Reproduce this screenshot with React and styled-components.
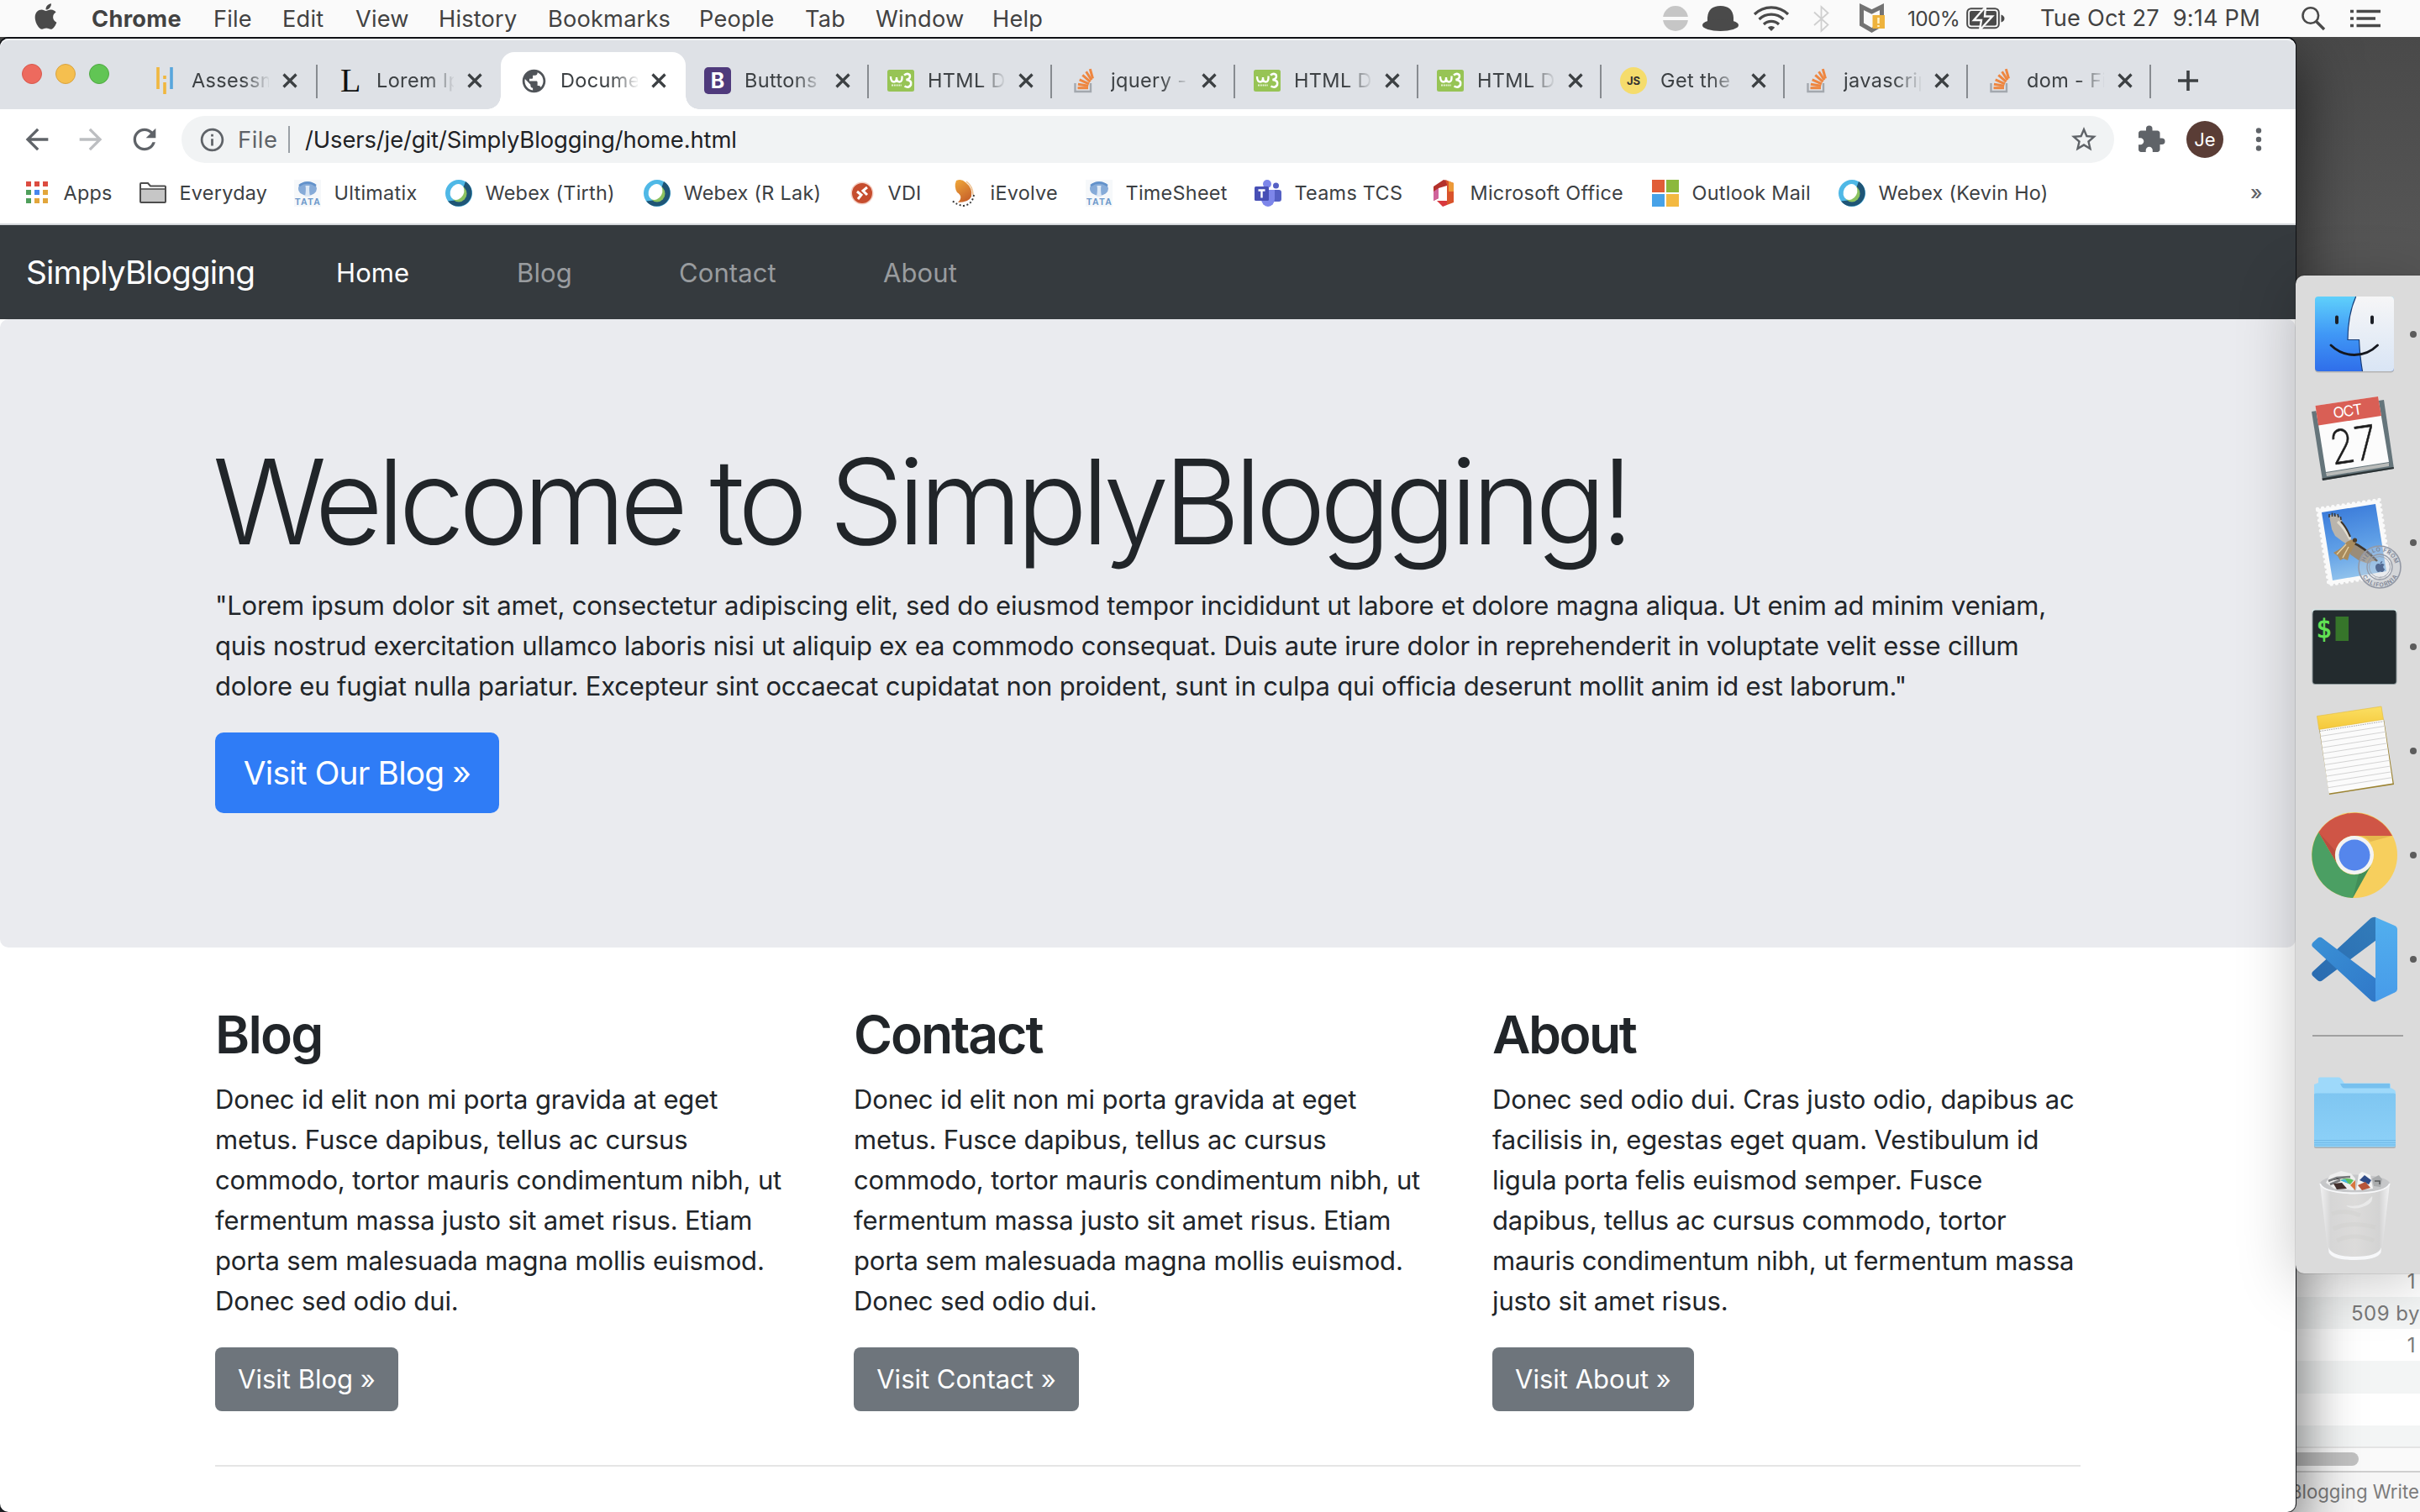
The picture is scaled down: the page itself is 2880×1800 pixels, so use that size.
import React from 'react';
import styled, { createGlobalStyle, css } from 'styled-components';
import { FaApple } from 'react-icons/fa';
import { MdArrowBack, MdArrowForward, MdRefresh, MdStarBorder, MdExtension, MdInfoOutline, MdPublic } from 'react-icons/md';

const sans = `Inter, "Liberation Sans", sans-serif`;

const GlobalStyle = createGlobalStyle`
  *, *::before, *::after { box-sizing: border-box; }
  html, body { margin: 0; overflow: hidden; }
  body { font-family: ${sans}; }
  h1, h2, p { margin: 0; }
  svg { display: block; flex: none; overflow: visible; }
`;

/* ---------- desktop ---------- */

const Desktop = styled.div`
  position: relative;
  width: 2880px;
  height: 1800px;
  overflow: hidden;
  display: flex;
  flex-direction: column;
  background: linear-gradient(180deg, #474747 0, #565656 300px, #565656 1000px, #2b2f33 1790px);
`;

/* ---------- menu bar ---------- */

const MenuBar = styled.header`
  position: relative;
  z-index: 3;
  height: 44px;
  flex: none;
  display: flex;
  align-items: center;
  padding-left: 37px;
  background: #fafafa;
  color: #424242;
  font-size: 27.2px;
  letter-spacing: 0.2px;
  white-space: pre;
`;

const AppleSlot = styled.div`
  width: 72px;
  color: #4a4a4a;
  margin-top: -5px;
`;

const MenuItem = styled.div`
  width: ${(p) => p.$w}px;
  flex: none;
  line-height: 44px;
  margin-top: 1px;
  font-weight: ${(p) => (p.$strong ? 700 : 400)};
  letter-spacing: ${(p) => (p.$strong ? 0.3 : 0.2)}px;
`;

const StatusArea = styled.div`
  margin-left: auto;
  padding-right: 47px;
  display: flex;
  align-items: center;
`;

const StatusSlot = styled.div`
  width: ${(p) => p.$w}px;
  flex: none;
  line-height: 44px;
  font-size: ${(p) => p.$size || 27.2}px;
  letter-spacing: ${(p) => p.$ls || 0}px;
`;

/* ---------- browser window ---------- */

const BrowserWindow = styled.section`
  position: relative;
  z-index: 1;
  margin-top: 2px;
  width: 2732px;
  height: 1754px;
  display: flex;
  flex-direction: column;
  border-radius: 10px;
  background: #fff;
  box-shadow: 0 -1px 0 1px #101216, 0 0 0 1px rgba(12, 14, 18, 0.6), 0 26px 70px 4px rgba(0, 0, 0, 0.6);
`;

const TabStrip = styled.div`
  height: 84px;
  flex: none;
  display: flex;
  padding: 16px 0 0 26px;
  background: #dee1e6;
  border-radius: 10px 10px 0 0;
  box-shadow: inset 0 2px 0 #eff1f4;
`;

const TrafficLights = styled.div`
  width: 132px;
  height: 52px;
  display: flex;
  align-items: center;
  gap: 16px;
`;

const Light = styled.span`
  width: 24px;
  height: 24px;
  border-radius: 50%;
  background: ${(p) => p.$color};
  border: 1px solid ${(p) => p.$edge};
`;

const Tab = styled.div`
  position: relative;
  width: ${(p) => p.$w}px;
  height: 68px;
  flex: none;
  display: flex;
  align-items: center;
  padding-left: ${(p) => (p.$active ? 23 : 22)}px;
  color: #3c4043;
  ${(p) =>
    p.$active &&
    css`
      background: #fff;
      border-radius: 16px 16px 0 0;
      &::before,
      &::after {
        content: '';
        position: absolute;
        bottom: 0;
        width: 16px;
        height: 16px;
      }
      &::before {
        left: -16px;
        background: radial-gradient(circle at 0 0, transparent 15.5px, #fff 16px);
      }
      &::after {
        right: -16px;
        background: radial-gradient(circle at 100% 0, transparent 15.5px, #fff 16px);
      }
    `}
  ${(p) =>
    p.$divider &&
    css`
      background: linear-gradient(#878b90, #878b90) right 15px / 2px 40px no-repeat;
    `}
`;

const TabIcon = styled.div`
  width: 32px;
  height: 32px;
  flex: none;
  display: grid;
  place-items: center;
`;

const TabTitle = styled.div`
  width: 92px;
  margin-left: 16px;
  flex: none;
  overflow: hidden;
  white-space: pre;
  font-size: 23.5px;
  line-height: 32px;
  letter-spacing: 0.35px;
  mask-image: linear-gradient(90deg, #000 60px, transparent 94px);
`;

const TabClose = styled.div`
  margin-left: 14.5px;
`;

const NewTab = styled.div`
  height: 68px;
  display: flex;
  align-items: center;
  margin-left: 32px;
`;

const Toolbar = styled.div`
  height: 72px;
  flex: none;
  display: flex;
  align-items: center;
  padding: 0 36px 0 24px;
  color: #5f6368;
`;

const ToolButton = styled.div`
  width: 64px;
  flex: none;
  color: ${(p) => (p.$disabled ? '#bcbec1' : '#5f6368')};
`;

const Omnibox = styled.div`
  height: 56px;
  width: 2300px;
  flex: none;
  display: flex;
  align-items: center;
  border-radius: 28px;
  background: #f1f3f4;
  padding: 0 18px 0 20px;
  font-size: 27.4px;
  white-space: nowrap;
`;

const Scheme = styled.span`
  width: 60px;
  margin-left: 14px;
  letter-spacing: 0.5px;
`;

const SchemeDivider = styled.span`
  width: 2px;
  height: 32px;
  background: #9aa0a6;
  margin-right: 18px;
`;

const Url = styled.span`
  flex: 1;
  color: #202124;
  letter-spacing: -0.1px;
`;

const Avatar = styled.div`
  width: 44px;
  height: 44px;
  margin-left: 24px;
  display: grid;
  place-items: center;
  border-radius: 50%;
  background: #5a3d36;
  color: #fff;
  font-size: 22px;
`;

const Extension = styled.div`
  margin-left: 26px;
`;

const Overflow = styled.div`
  margin-left: 37px;
`;

const BookmarksBar = styled.div`
  height: 66px;
  flex: none;
  display: flex;
  align-items: center;
  padding: 0 39px 9px 28px;
  border-bottom: 2px solid #d5d8dc;
  color: #3c4043;
  font-size: 23.4px;
  letter-spacing: 0.28px;
  white-space: nowrap;
`;

const Bookmark = styled.div`
  width: ${(p) => p.$w}px;
  flex: none;
  display: flex;
  align-items: center;
  gap: 15.5px;
`;

const BookmarkMore = styled.div`
  margin-left: auto;
  font-size: 24px;
  font-weight: 500;
  color: #5f6368;
`;

/* ---------- blog page ---------- */

const Page = styled.main`
  flex: 1;
  min-height: 0;
  overflow: hidden;
  border-radius: 0 0 10px 10px;
  color: #212529;
  font-size: 31px;
  line-height: 48px;
  letter-spacing: -0.13px;
  white-space: nowrap;
`;

const Navbar = styled.nav`
  height: 112px;
  display: flex;
  align-items: center;
  padding: 0 31px;
  background: #353a3e;
`;

const Brand = styled.div`
  width: 369px;
  color: #fff;
  font-size: 38.8px;
  letter-spacing: -0.95px;
  line-height: 60px;
`;

const NavLink = styled.div`
  width: ${(p) => p.$w}px;
  color: ${(p) => (p.$active ? '#fff' : '#999c9f')};
  letter-spacing: 0.1px;
  margin-top: 1px;
`;

const Jumbotron = styled.section`
  height: 748px;
  padding: 128px 226px 0 256px;
  border-radius: 10px;
  background: #eaebef;
`;

const Title = styled.h1`
  font-size: 140.5px;
  font-weight: 320;
  line-height: 172.8px;
  letter-spacing: -7.1px;
  padding-top: 3px;
  margin: 0 0 13px -3px;
`;

const Lead = styled.p`
  margin-bottom: 31px;
  letter-spacing: -0.18px;
`;

const Copy = styled.p`
  margin-bottom: 31px;
`;

const Line = styled.span`
  display: block;
`;

const Button = styled.div`
  display: inline-flex;
  align-items: center;
  justify-content: center;
  height: ${(p) => (p.$large ? 96 : 76)}px;
  width: ${(p) => p.$w}px;
  border-radius: ${(p) => (p.$large ? 10 : 8)}px;
  background: ${(p) => (p.$large ? '#2f7cf6' : '#6e757c')};
  color: #fff;
  font-size: ${(p) => (p.$large ? 38.8 : 31)}px;
  letter-spacing: ${(p) => (p.$large ? -0.8 : 0)}px;
`;

const Container = styled.div`
  margin: 63px 256px 0;
`;

const Columns = styled.div`
  display: grid;
  grid-template-columns: repeat(3, 700px);
  column-gap: 60px;
`;

const Heading = styled.h2`
  font-size: 62.5px;
  font-weight: 560;
  line-height: 76.8px;
  letter-spacing: ${(p) => p.$ls}px;
  padding-top: 2px;
  margin-bottom: 15px;
`;

const Rule = styled.hr`
  width: 2220px;
  height: 2px;
  border: 0;
  margin: 64px 0 0;
  background: #e5e5e5;
`;

/* ---------- file list window behind the browser ---------- */

const FileWindow = styled.section`
  position: absolute;
  left: 2700px;
  top: 1506px;
  width: 180px;
  height: 294px;
  display: flex;
  flex-direction: column;
  color: #7a7a7a;
  background: #fff;
`;

const FileRow = styled.div`
  height: ${(p) => p.$h || 38.2}px;
  display: flex;
  align-items: center;
  justify-content: flex-end;
  padding-right: ${(p) => p.$right ?? 5}px;
  background: ${(p) => (p.$alt ? '#f3f5f5' : '#fff')};
  font-size: 24px;
  letter-spacing: 0.5px;
  white-space: nowrap;
`;

const ScrollTrack = styled.div`
  height: 29px;
  padding: 5px 0;
  border-top: 2px solid #e4e4e4;
  background: #fafafa;
`;

const ScrollThumb = styled.div`
  width: 107px;
  height: 16px;
  border-radius: 8px;
  background: #c1c1c1;
`;

const PathBar = styled.div`
  flex: 1;
  border-top: 2px solid #cfcfcf;
  background: #f6f6f6;
  padding: 7px 0 0 25px;
  font-size: 22.2px;
  line-height: 32px;
  letter-spacing: 0;
  white-space: nowrap;
  color: #7c7c7c;
`;

/* ---------- dock ---------- */

const Dock = styled.aside`
  position: absolute;
  z-index: 2;
  right: 0;
  top: 328px;
  width: 148px;
  height: 1188px;
  padding: 19px 0 20px 19px;
  display: flex;
  flex-direction: column;
  gap: 22px;
  border-radius: 10px 0 0 10px;
  background: #dbdbdb;
  box-shadow: 0 0 0 1px rgba(0, 0, 0, 0.1), 0 10px 70px rgba(0, 0, 0, 0.22);
`;

const DockItem = styled.div`
  height: 102px;
  display: flex;
  align-items: center;
  gap: 15px;
`;

const RunningDot = styled.span`
  width: 8px;
  height: 8px;
  border-radius: 50%;
  background: #5c5c5c;
`;

const DockSeparator = styled.div`
  width: 108px;
  height: 2px;
  flex: none;
  margin: 17px 0 17px 1px;
  background: #a0a0a0;
`;

/* ---------- icons ---------- */

const WifiIcon = () => (
  <svg width="44" height="32" viewBox="0 0 44 32" fill="none" stroke="#4a4a4a" strokeWidth="3.2">
    <path d="M2 11 A28.5 28.5 0 0 1 42 11" />
    <path d="M7.5 17 A21 21 0 0 1 36.500 17" />
    <path d="M13 23 A13 13 0 0 1 31 23" />
    <path d="M22 31 L17.800 26.800 A6 6 0 0 1 26.200 26.800 Z" fill="#4a4a4a" stroke="none" />
  </svg>
);

const BatteryIcon = () => (
  <svg width="46" height="26" viewBox="0 0 46 26">
    <rect x="1.200" y="1.200" width="37.600" height="23" rx="4.500" fill="none" stroke="#4a4a4a" strokeWidth="2" />
    <rect x="4" y="4" width="32" height="17.500" rx="2" fill="#4a4a4a" />
    <path d="M41.500 8.500 Q45.500 10 45.500 13 Q45.500 16 41.500 17.500 Z" fill="#4a4a4a" />
    <path d="M23 -1 L9 15 H18 L16 27 L31 10.500 H22 Z" fill="#4a4a4a" stroke="#fafafa" strokeWidth="2.400" />
  </svg>
);

const ShieldIcon = () => (
  <svg width="30" height="32" viewBox="0 0 30 32">
    <path d="M2.500 2 L14.500 8 L26.500 2 V23 L14.500 30 L2.500 23 Z" fill="#fafafa" stroke="#737373" strokeWidth="5" />
    <rect x="15.500" y="12" width="14.500" height="16" fill="#eeb33d" />
    <path d="M22.500 15 V22 M22.500 24 V26" stroke="#fff3c9" strokeWidth="2.500" />
  </svg>
);

const StackIcon = () => (
  <svg width="28" height="30" viewBox="0 0 28 30" fill="none">
    <path d="M3.500 18 V28 H22 V18" stroke="#a3a8ae" strokeWidth="2.400" />
    <g stroke="#ee8640" strokeWidth="3">
      <path d="M6.500 23.700 H19" />
      <path d="M6.900 19.200 L19.200 21.200" />
      <path d="M8.700 13.800 L20 18.800" />
      <path d="M12.300 8.300 L21.500 16.300" />
      <path d="M16.600 4.200 L23 14.200" />
      <path d="M21.300 1.200 L24.500 12.500" />
    </g>
  </svg>
);

const W3Icon = () => (
  <svg width="32" height="26" viewBox="0 0 32 26">
    <rect width="32" height="26" rx="2.500" fill="#97c455" />
    <path d="M4 8 Q4 14.500 8 14.500 Q11 14.500 11 9 Q11 14.500 14.500 14.500 Q18 14.500 17.500 7.500" fill="none" stroke="#fff" strokeWidth="2.300" />
    <path d="M20 6.500 Q24 3.500 26.500 6 Q28.500 10.500 22.500 12 Q29.500 12.500 28 18 Q25.500 22.500 20.500 19.500" fill="none" stroke="#fff" strokeWidth="2.600" />
    <path d="M5 18.500 H17" stroke="#e4f1d2" strokeWidth="2" strokeDasharray="2 0.800" />
  </svg>
);

const BarsIcon = () => (
  <svg width="32" height="32" viewBox="0 0 32 32" strokeWidth="3.600">
    <path d="M8 0 V26 M16 10 V14 M16 18 V32" stroke="#f0b73f" />
    <path d="M24 0 V26" stroke="#58a6dc" />
  </svg>
);

const LetterIcon = () => (
  <svg width="32" height="32" viewBox="0 0 32 32">
    <text x="5" y="29" fontFamily="Liberation Serif, serif" fontSize="40" fill="#111">L</text>
  </svg>
);

const BootstrapIcon = () => (
  <svg width="32" height="32" viewBox="0 0 32 32">
    <rect width="32" height="32" rx="5" fill="#4f3a7c" />
    <text x="16" y="25" textAnchor="middle" fontFamily="Inter, sans-serif" fontWeight="700" fontSize="25" fill="#fff">B</text>
  </svg>
);

const JsIcon = () => (
  <svg width="32" height="32" viewBox="0 0 32 32">
    <circle cx="16" cy="16" r="16" fill="#f5dc6c" />
    <text x="16" y="21" textAnchor="middle" fontFamily="Inter, sans-serif" fontWeight="700" fontSize="13" fill="#333">JS</text>
  </svg>
);

const AppsIcon = () => (
  <svg width="32" height="32" viewBox="0 0 32 32">
    {['#dc4c40', '#dc4c40', '#dc4c40', '#4f9f5b', '#4687ed', '#e2a63b', '#4f9f5b', '#e2a63b', '#e2a63b'].map((c, i) => (
      <rect key={i} x={3 + (i % 3) * 10} y={2 + Math.floor(i / 3) * 10} width="6" height="6" fill={c} />
    ))}
  </svg>
);

const SmallFolderIcon = () => (
  <svg width="32" height="32" viewBox="0 0 32 32">
    <path d="M1 26 V5 Q1 4 2 4 H10 L13 7.500 H30 Q31 7.500 31 8.500 V26 Q31 27 30 27 H2 Q1 27 1 26 Z" fill="#fff" stroke="#4d4d4d" strokeWidth="2" />
    <path d="M2 11 H30 V26 H2 Z" fill="#c6c6c6" />
    <path d="M1 11 H31" stroke="#4d4d4d" strokeWidth="1.600" />
  </svg>
);

const TataIcon = () => (
  <svg width="32" height="32" viewBox="0 0 32 32">
    <rect width="32" height="32" fill="#f6f8fa" />
    <ellipse cx="16" cy="10.500" rx="11" ry="8.500" fill="#86abd8" />
    <path d="M13 20 Q14.500 12 13.500 7 H18.500 Q17.500 12 19 20 Z" fill="#dce8f5" />
    <path d="M6 7 Q16 0 26 7" stroke="#6191ca" strokeWidth="2.500" fill="none" />
    <text x="1" y="30" fontFamily="Liberation Sans, sans-serif" fontWeight="700" fontSize="10.500" textLength="30" fill="#6d98cb">TATA</text>
  </svg>
);

const WebexIcon = () => (
  <svg width="32" height="32" viewBox="0 0 32 32">
    <circle cx="16" cy="16" r="16" fill="#4fb8e6" />
    <path d="M24 2 A16 16 0 1 1 3 25.500 L16 24 Z" fill="#1f5576" />
    <ellipse cx="16" cy="16.500" rx="9.500" ry="10" fill="#8bc25f" />
    <ellipse cx="14" cy="14.500" rx="8" ry="9.800" transform="rotate(28 14 14.500)" fill="#fff" />
  </svg>
);

const VdiIcon = () => (
  <svg width="32" height="32" viewBox="0 0 32 32">
    <circle cx="17" cy="16" r="13.500" fill="#f4cfc4" />
    <circle cx="17" cy="16" r="12" fill="#c64d2e" />
    <path d="M11 14 L16 18 L12 23 M23 9 L18 13 L23 18" fill="none" stroke="#fff" strokeWidth="3" />
  </svg>
);

const EvolveIcon = () => (
  <svg width="32" height="32" viewBox="0 0 32 32">
    <defs>
      <linearGradient id="evolve" x1="0" y1="0" x2="0.500" y2="1">
        <stop offset="0" stopColor="#f0a93a" />
        <stop offset="1" stopColor="#c9652b" />
      </linearGradient>
    </defs>
    <path d="M7 1 Q13 -2 18 3 Q27 10 25 20 Q22 27 9 27 Q16 20 8 15 Q4 8 7 1 Z" fill="url(#evolve)" />
    <path d="M19 2 Q27 8 27 18" fill="none" stroke="#eec08e" strokeWidth="1.500" />
    <path d="M28 18 Q26 30 15 31 Q8 30 1 24" fill="none" stroke="#3a3a3a" strokeWidth="2" strokeDasharray="2 2.500" />
  </svg>
);

const TeamsIcon = () => (
  <svg width="32" height="32" viewBox="0 0 32 32">
    <circle cx="25.500" cy="7" r="3.500" fill="#5560c4" />
    <rect x="21" y="12" width="11" height="14" rx="3" fill="#5560c4" />
    <circle cx="15" cy="5" r="5" fill="#7d86ea" />
    <path d="M8 12 H24 V23 A8 9 0 0 1 8 23 Z" fill="#7d86ea" />
    <rect x="0" y="8" width="17" height="17" rx="1.500" fill="#474fb5" />
    <path d="M4.500 12.500 H12.500 M8.500 12.500 V21.500" stroke="#fff" strokeWidth="2.400" />
  </svg>
);

const OfficeIcon = () => (
  <svg width="32" height="32" viewBox="0 0 32 32">
    <path d="M4 8 L16 0 L20 1 V7 L10 10 V22 L4 25 Z" fill="#b3312b" />
    <path d="M4 14 L10 10 V22 L4 25 Z" fill="#d0639b" />
    <path d="M18 0 L28 4 V27 L20 30 V6 Z" fill="#d9532b" />
    <path d="M22 1.500 L28 4 V14 H22 Z" fill="#ec9a38" />
    <path d="M8 25 H20 V30 L15 32 Z" fill="#d8383e" />
  </svg>
);

const MicrosoftIcon = () => (
  <svg width="32" height="32" viewBox="0 0 32 32">
    <path d="M0 0 H15 V15 H0 Z" fill="#e15d37" />
    <path d="M17 0 H32 V15 H17 Z" fill="#8cb83c" />
    <path d="M0 17 H15 V32 H0 Z" fill="#47a2e8" />
    <path d="M17 17 H32 V32 H17 Z" fill="#f3b942" />
  </svg>
);

const FinderIcon = () => (
  <svg width="102" height="102" viewBox="0 0 102 102">
    <defs>
      <linearGradient id="finderBlue" x1="0" y1="0" x2="0" y2="1">
        <stop offset="0" stopColor="#5fd0fb" />
        <stop offset="0.500" stopColor="#4098f6" />
        <stop offset="1" stopColor="#2f6eea" />
      </linearGradient>
      <linearGradient id="finderLight" x1="0" y1="0" x2="0" y2="1">
        <stop offset="0" stopColor="#f6f6f7" />
        <stop offset="1" stopColor="#d9e5f5" />
      </linearGradient>
    </defs>
    <rect x="4" y="7.500" width="94" height="89" rx="4" fill="#000" opacity="0.180" />
    <rect x="4" y="6" width="94" height="89" rx="4" fill="url(#finderBlue)" />
    <path d="M52.700 6 H94 Q98 6 98 10 V91 Q98 95 94 95 H60.500 Q57.500 78 56.500 57.500 H43 Q43 28 52.700 6 Z" fill="url(#finderLight)" />
    <path d="M52.700 6 Q43 28 43 57.500 H56.500 Q57.500 78 60.500 95" fill="none" stroke="#173d78" strokeWidth="1.200" />
    <path d="M30 30.500 V37 M72 30.500 V37" stroke="#1c1f26" strokeWidth="4" strokeLinecap="round" />
    <path d="M23 64 Q35 75.500 51 75.500 Q67 75.500 78.500 64" fill="none" stroke="#14171f" strokeWidth="2.800" strokeLinecap="round" />
  </svg>
);

const CalendarIcon = () => (
  <svg width="102" height="102" viewBox="0 0 102 102">
    <path d="M0 19 L86 5 L98 87 L13 101 Z" fill="#65757b" />
    <path d="M13 101 L98 87 L97.500 85 L12.500 98.500 Z" fill="#2b3234" />
    <path d="M17 92 L92 80 L92 84 L18 96 Z" fill="#b9bbb9" />
    <path d="M4.500 12 L79 1 L92 79 L17 91 Z" fill="#fcfcfc" />
    <path d="M4.500 12 L79 1 L83 24 L8 35.500 Z" fill="#d95f55" />
    <g transform="rotate(-8.500 43 22)">
      <text x="43.500" y="24.500" textAnchor="middle" fontFamily="Inter, sans-serif" fontSize="17.500" textLength="35" fill="#fff">OCT</text>
    </g>
    <g transform="rotate(-8.500 50 58)">
      <text x="49.500" y="78.500" textAnchor="middle" fontFamily="Inter, sans-serif" fontWeight="250" fontSize="56" textLength="56" lengthAdjust="spacingAndGlyphs" fill="#1d1d1d" stroke="#1d1d1d" strokeWidth="0.600">27</text>
    </g>
  </svg>
);

const MailIcon = () => (
  <svg width="102" height="102" viewBox="0 0 102 102">
    <defs>
      <linearGradient id="mailSky" x1="0" y1="0" x2="0.200" y2="1">
        <stop offset="0" stopColor="#3576d8" />
        <stop offset="0.600" stopColor="#5e9ee6" />
        <stop offset="1" stopColor="#8fc1ec" />
      </linearGradient>
      <path id="markTop" d="M62.500 80 A18.500 18.500 0 0 1 99.500 80" />
      <path id="markBottom" d="M57.500 80 A23.500 23.500 0 0 0 104.500 80" />
    </defs>
    <path d="M7 11 L80.500 0 L94 89 L20.500 101 Z" fill="#fafafa" stroke="#fafafa" strokeWidth="4.500" strokeDasharray="0 6.200" strokeLinecap="round" />
    <path d="M12 15 L76 5 L89 85 L25 96 Z" fill="url(#mailSky)" />
    <path d="M21 19 L25 17 L27 20 L30 17 L34 21 L36 25 L39 33 L44 42 L48 49 L42 53 L36 49 L28 43 L24 35 Z" fill="#b9b4ac" />
    <path d="M21 21 V17 M24.500 20 V15.500 M28 20 L27.500 16 M32 21 L31 17 M35 24 L34.500 20" stroke="#3b3835" strokeWidth="1.600" />
    <path d="M31 26 Q39 33 46 47" fill="none" stroke="#e1dccf" strokeWidth="3" />
    <path d="M35 26 Q41 32 46 44" fill="none" stroke="#3f352a" strokeWidth="2" />
    <path d="M47 51 L56 56 L67 63 L79 73 L72 73 L67 76 L56 72 L46 65 Z" fill="#9a8c78" />
    <path d="M49 51 Q62 56 78 73" fill="none" stroke="#3f352a" strokeWidth="2.500" />
    <path d="M42 50 Q50 46 54 47 Q51 55 45 65 L43 72 L38 70 L34 72 L31 67 L26 63 Q36 58 42 50 Z" fill="#a98b5c" />
    <path d="M41 53 L30 65 M44 56 L37 69" stroke="#e2cfa6" strokeWidth="1.500" />
    <circle cx="51.500" cy="48" r="2.600" fill="#4c3d2b" />
    <circle cx="81" cy="80" r="25" fill="#c9cdd6" fillOpacity="0.350" stroke="#9499a5" strokeWidth="1.600" />
    <circle cx="81" cy="80" r="15" fill="none" stroke="#9499a5" strokeWidth="1.300" />
    <circle cx="81" cy="80" r="12.500" fill="none" stroke="#9499a5" strokeWidth="0.800" />
    <g fontFamily="Inter, sans-serif" fontSize="6.800" fontWeight="600" fill="#7d8494">
      <text><textPath href="#markTop" startOffset="6" textLength="48">HELLO FROM</textPath></text>
      <text><textPath href="#markBottom" startOffset="12" textLength="50">CALIFORNIA</textPath></text>
    </g>
    <g transform="translate(74 72)" color="#536a92"><FaApple size={15} /></g>
  </svg>
);

const TerminalIcon = () => (
  <svg width="102" height="102" viewBox="0 0 102 102">
    <rect x="0.500" y="6.500" width="101" height="89.500" rx="4" fill="#8f9a9c" />
    <rect x="0.500" y="6" width="101" height="6" rx="3" fill="#d5e5e4" />
    <rect x="1.500" y="7.500" width="99" height="87.500" rx="3" fill="#232b2e" />
    <text x="5.500" y="39.500" fontFamily="DejaVu Sans Mono, monospace" fontSize="30" stroke="#62e354" strokeWidth="0.800" fill="#62e354">$</text>
    <rect x="28.500" y="15" width="15.500" height="29" fill="#36752a" />
  </svg>
);

const NotesIcon = () => (
  <svg width="102" height="102" viewBox="0 0 102 102">
    <defs>
      <linearGradient id="notesBand" x1="0" y1="0" x2="0" y2="1">
        <stop offset="0" stopColor="#fbdf63" />
        <stop offset="1" stopColor="#f5c83a" />
      </linearGradient>
    </defs>
    <path d="M9 25 L86 13 L98 91 L21 103 Z" fill="#9c8433" />
    <path d="M9.500 25 L85.500 13 L96.500 89.500 L20.500 101.500 Z" fill="#fbfbfb" />
    <path d="M6.500 9.500 L83 -2 L85.500 13.500 L8.800 25.500 Z" fill="url(#notesBand)" stroke="#e3ba3b" strokeWidth="0.600" />
    <path d="M10 27.500 L85.500 15.800" stroke="#a5a5a5" strokeWidth="1" strokeDasharray="1.500 1.200" />
    {Array.from({ length: 10 }, (_, i) => (
      <path key={i} d={`M${10.500 + i} ${33.500 + i * 6.800} L${86.500 + i} ${21.500 + i * 6.800}`} stroke="#d3d3d3" strokeWidth="1" />
    ))}
  </svg>
);

const ChromeIcon = () => (
  <svg width="102" height="102" viewBox="0 0 102 102">
    <circle cx="51" cy="51" r="51" fill="#f7cf5d" />
    <path d="M8.300 23.700 A51 51 0 0 1 96 28 H51 A23 23 0 0 0 31 62.500 Z" fill="#cf5546" />
    <path d="M8.300 23.700 A51 51 0 0 0 49 102 L71 62.500 A23 23 0 0 1 31 62.500 Z" fill="#4b9f63" />
    <path d="M8.300 23.700 L29 59 A23 23 0 0 1 28.500 46 Z" fill="#a9453a" opacity="0.550" />
    <path d="M51 28 H96 L70 35 A23 23 0 0 0 51 28 Z" fill="#d9a942" opacity="0.600" />
    <path d="M49 102 L71 62.500 A23 23 0 0 1 56 73.500 Z" fill="#37794b" opacity="0.450" />
    <circle cx="51" cy="51" r="23" fill="#f3f3f3" />
    <circle cx="51" cy="51" r="18.500" fill="#5586ec" />
  </svg>
);

const CodeIcon = () => (
  <svg width="102" height="102" viewBox="0 0 102 102">
    <defs>
      <linearGradient id="codeUpper" x1="1" y1="0" x2="0" y2="1">
        <stop offset="0" stopColor="#327cba" />
        <stop offset="1" stopColor="#2a6bb0" />
      </linearGradient>
      <linearGradient id="codeLower" x1="0" y1="0" x2="1" y2="1">
        <stop offset="0" stopColor="#3a91d6" />
        <stop offset="1" stopColor="#3078c8" />
      </linearGradient>
      <linearGradient id="codeSide" x1="0" y1="0" x2="0" y2="1">
        <stop offset="0" stopColor="#52afee" />
        <stop offset="1" stopColor="#479be9" />
      </linearGradient>
    </defs>
    <path d="M70 2.500 Q73 0 76.500 1 V28.500 L13 76 Q10 78.500 7 76 L1.500 71 Q-1 68 1.500 65.500 Z" fill="url(#codeUpper)" />
    <path d="M70 99.500 Q73 102.500 76.500 101 V74 L13 26 Q10 23.500 7 26 L1.500 31 Q-1 34 1.500 36.500 Z" fill="url(#codeLower)" />
    <path d="M76 1 L99 11 Q102 12.500 102 15.500 V86.500 Q102 89 99 90.500 L76 101.500 Z" fill="url(#codeSide)" />
  </svg>
);

const FolderIcon = () => (
  <svg width="102" height="102" viewBox="0 0 102 102">
    <defs>
      <linearGradient id="folderFront" x1="0" y1="0" x2="0" y2="1">
        <stop offset="0" stopColor="#7fc6f1" />
        <stop offset="1" stopColor="#8dd1f8" />
      </linearGradient>
    </defs>
    <rect x="3" y="30" width="97" height="64" rx="2" fill="#000" opacity="0.200" />
    <path d="M3 30 V18 L8 16 V11 Q8 9.500 10 9.500 H32 Q34 9.500 35 11 L39 16.500 H92 Q94 16.500 94 18.500 V22 L98 24 Q100 25 100 28 V40 H3 Z" fill="#9ed9fa" />
    <path d="M34 17 H93 V22.500 H39 Q37 22.500 35.500 20 Z" fill="#77c0ee" />
    <path d="M3 30 Q3 28.500 5 28.500 H98 Q100 28.500 100 30 V90.500 Q100 92.500 98 92.500 H5 Q3 92.500 3 90.500 Z" fill="url(#folderFront)" />
    <path d="M3 84.500 H100 M3 87.300 H100 M3 90 H100" stroke="#6db6e4" strokeWidth="0.900" />
  </svg>
);

const TrashIcon = () => (
  <svg width="102" height="102" viewBox="0 0 102 102">
    <defs>
      <linearGradient id="bin" x1="0" y1="0" x2="1" y2="0">
        <stop offset="0" stopColor="#f1f1f2" />
        <stop offset="0.150" stopColor="#d6d6d6" />
        <stop offset="0.500" stopColor="#dcdbda" />
        <stop offset="0.850" stopColor="#d3d3d3" />
        <stop offset="1" stopColor="#f4f4f5" />
      </linearGradient>
    </defs>
    <ellipse cx="51.500" cy="12" rx="41.500" ry="10.500" fill="#c6c7c9" />
    <path d="M17 11 L22 2 L35 -3 L47 0 L52 6 L50 20 L27 18 Z" fill="#eeeeee" />
    <path d="M20 9 L30 5 L46 4 M22 13 L34 8" stroke="#77797b" strokeWidth="2.500" />
    <path d="M26 12 L36 11 L42 18 L30 19 Z" fill="#43302d" />
    <path d="M34 8 Q42 4 50 8 L46 13 Z" fill="#5cc05b" />
    <path d="M34 8 L40 7 L44 12 Z" fill="#41b5e8" />
    <path d="M46 14 L52 8 L52 20 Z" fill="#d8763e" />
    <path d="M53 20 L56 1 L60 -2 L70 2 L73 18 Z" fill="#f4f4f4" />
    <path d="M57 8 L63 2 L71 8 L68 13 Z" fill="#2f4a86" />
    <path d="M55 14 L64 10 L70 17 L60 20 Z" fill="#b8553a" />
    <path d="M72 6 L80 2 L84 7 L82 16 L74 15 Z" fill="#a9abad" />
    <path d="M75 9 H81 V13" stroke="#57595b" strokeWidth="1.600" fill="none" />
    <path d="M10 12 Q14 23 51.500 23.500 Q89 23 93 12 L84 90 Q82 103 51.500 103 Q21 103 19 90 Z" fill="url(#bin)" />
    <path d="M20 88 Q24 99 51.500 99 Q79 99 83 88 L82.500 94 Q78 103 51.500 103 Q25 103 20.500 94 Z" fill="#f7f8fa" />
    <path d="M10 12 Q14 23 51.500 23.500 Q89 23 93 12" fill="none" stroke="#f8f9fb" strokeWidth="1.800" />
    <path d="M41 38 Q60 42 72 27 Q74 36 60 40 Q48 44 41 38 Z" fill="#e9e9e9" />
    <path d="M24 48 Q40 42 58 50 M26 66 Q44 56 76 64 M30 80 Q50 70 74 80" stroke="#cfcdcb" strokeWidth="5" fill="none" opacity="0.350" />
  </svg>
);

/* ---------- content ---------- */

const menus = [
  ['Chrome', 145], ['File', 82], ['Edit', 87], ['View', 99], ['History', 130],
  ['Bookmarks', 180], ['People', 126], ['Tab', 84], ['Window', 139], ['Help', 80],
];

const tabs = [
  { title: 'Assessm', icon: <BarsIcon />, w: 220, divider: true },
  { title: 'Lorem Ip', icon: <LetterIcon />, w: 218 },
  { title: 'Docume', icon: <MdPublic size={33} color="#505459" />, w: 220, active: true },
  { title: 'Buttons', icon: <BootstrapIcon />, w: 218, divider: true },
  { title: 'HTML D', icon: <W3Icon />, w: 218, divider: true },
  { title: 'jquery - ', icon: <StackIcon />, w: 218, divider: true },
  { title: 'HTML D', icon: <W3Icon />, w: 218, divider: true },
  { title: 'HTML D', icon: <W3Icon />, w: 218, divider: true },
  { title: 'Get the ', icon: <JsIcon />, w: 218, divider: true },
  { title: 'javascrip', icon: <StackIcon />, w: 218, divider: true },
  { title: 'dom - Fi', icon: <StackIcon />, w: 218, divider: true },
];

const bookmarks = [
  ['Apps', AppsIcon, 138], ['Everyday', SmallFolderIcon, 184], ['Ultimatix', TataIcon, 180],
  ['Webex (Tirth)', WebexIcon, 236], ['Webex (R Lak)', WebexIcon, 243], ['VDI', VdiIcon, 122],
  ['iEvolve', EvolveIcon, 161], ['TimeSheet', TataIcon, 201], ['Teams TCS', TeamsIcon, 209],
  ['Microsoft Office', OfficeIcon, 264], ['Outlook Mail', MicrosoftIcon, 222], ['Webex (Kevin Ho)', WebexIcon, 260],
];

const lead = [
  '"Lorem ipsum dolor sit amet, consectetur adipiscing elit, sed do eiusmod tempor incididunt ut labore et dolore magna aliqua. Ut enim ad minim veniam,',
  'quis nostrud exercitation ullamco laboris nisi ut aliquip ex ea commodo consequat. Duis aute irure dolor in reprehenderit in voluptate velit esse cillum',
  'dolore eu fugiat nulla pariatur. Excepteur sint occaecat cupidatat non proident, sunt in culpa qui officia deserunt mollit anim id est laborum."',
];

const donec = [
  'Donec id elit non mi porta gravida at eget',
  'metus. Fusce dapibus, tellus ac cursus',
  'commodo, tortor mauris condimentum nibh, ut',
  'fermentum massa justo sit amet risus. Etiam',
  'porta sem malesuada magna mollis euismod.',
  'Donec sed odio dui.',
];

const columns = [
  { title: 'Blog', ls: -1.8, lines: donec, action: 'Visit Blog »', w: 218 },
  { title: 'Contact', ls: -2.1, lines: donec, action: 'Visit Contact »', w: 268 },
  {
    title: 'About',
    ls: -2.5,
    lines: [
      'Donec sed odio dui. Cras justo odio, dapibus ac',
      'facilisis in, egestas eget quam. Vestibulum id',
      'ligula porta felis euismod semper. Fusce',
      'dapibus, tellus ac cursus commodo, tortor',
      'mauris condimentum nibh, ut fermentum massa',
      'justo sit amet risus.',
    ],
    action: 'Visit About »',
    w: 240,
  },
];

const dockApps = [
  [FinderIcon, true], [CalendarIcon, false], [MailIcon, true], [TerminalIcon, true],
  [NotesIcon, true], [ChromeIcon, true], [CodeIcon, true],
];

function SystemMenu() {
  return (
    <MenuBar>
      <AppleSlot><FaApple size={35} /></AppleSlot>
      {menus.map(([label, w], i) => (
        <MenuItem key={label} $w={w} $strong={i === 0}>{label}</MenuItem>
      ))}
      <StatusArea>
        <StatusSlot $w={47}>
          <svg width="30" height="30" viewBox="0 0 30 30"><circle cx="15" cy="15" r="15" fill="#c6c6c6" /><path d="M0 15 H30" stroke="#fafafa" strokeWidth="4" /></svg>
        </StatusSlot>
        <StatusSlot $w={60}>
          <svg width="43" height="30" viewBox="0 0 43 30" fill="#4a4a4a"><path d="M6 21 V14 Q7 0 21.500 0 Q36 0 37 14 V21 Z" /><ellipse cx="21.500" cy="23" rx="21.500" ry="7" /></svg>
        </StatusSlot>
        <StatusSlot $w={72}><WifiIcon /></StatusSlot>
        <StatusSlot $w={55}>
          <svg width="19" height="31" viewBox="0 0 19 31" fill="none" stroke="#cfcfcf" strokeWidth="1.800"><path d="M1 7.500 L17.500 22.500 L9.500 30 V1 L17.500 8.500 L1 23" /></svg>
        </StatusSlot>
        <StatusSlot $w={57}><ShieldIcon /></StatusSlot>
        <StatusSlot $w={70} $size={24.5} $ls={-0.7}>100%</StatusSlot>
        <StatusSlot $w={88}><BatteryIcon /></StatusSlot>
        <StatusSlot $w={311} $ls={0.2}>Tue Oct 27  9:14 PM</StatusSlot>
        <StatusSlot $w={58}>
          <svg width="30" height="30" viewBox="0 0 30 30" fill="none" stroke="#4a4a4a"><circle cx="10.800" cy="11.500" r="9.300" strokeWidth="2.600" /><path d="M17.500 18.500 L27 28" strokeWidth="3.400" /></svg>
        </StatusSlot>
        <StatusSlot $w={36}>
          <svg width="36" height="22" viewBox="0 0 36 22" stroke="#4a4a4a" strokeWidth="3.600"><path d="M0 2.500 H4 M7.500 2.500 H36 M0 11 H4 M7.500 11 H30 M0 19.500 H4 M7.500 19.500 H36" /></svg>
        </StatusSlot>
      </StatusArea>
    </MenuBar>
  );
}

function Browser() {
  return (
    <BrowserWindow>
      <TabStrip>
        <TrafficLights>
          <Light $color="#ed6a5e" $edge="#d8584d" />
          <Light $color="#f5bf4f" $edge="#d9a33f" />
          <Light $color="#61c554" $edge="#4fa942" />
        </TrafficLights>
        {tabs.map((t, i) => (
          <Tab key={i} $w={t.w} $active={t.active} $divider={t.divider}>
            <TabIcon>{t.icon}</TabIcon>
            <TabTitle>{t.title}</TabTitle>
            <TabClose>
              <svg width="20" height="20" viewBox="0 0 20 20"><path d="M2.500 2.500 L17.500 17.500 M17.500 2.500 L2.500 17.500" stroke="#3c4043" strokeWidth="3.200" /></svg>
            </TabClose>
          </Tab>
        ))}
        <NewTab>
          <svg width="24" height="24" viewBox="0 0 24 24"><path d="M12 0 V24 M0 12 H24" stroke="#3c4043" strokeWidth="3.600" /></svg>
        </NewTab>
      </TabStrip>
      <Toolbar>
        <ToolButton><MdArrowBack size={40} /></ToolButton>
        <ToolButton $disabled><MdArrowForward size={40} /></ToolButton>
        <ToolButton><MdRefresh size={40} /></ToolButton>
        <Omnibox>
          <MdInfoOutline size={33} />
          <Scheme>File</Scheme>
          <SchemeDivider />
          <Url>/Users/je/git/SimplyBlogging/home.html</Url>
          <MdStarBorder size={36} />
        </Omnibox>
        <Extension><MdExtension size={36} /></Extension>
        <Avatar>Je</Avatar>
        <Overflow>
          <svg width="10" height="28" viewBox="0 0 10 28" fill="#5f6368"><circle cx="5" cy="3.500" r="3.200" /><circle cx="5" cy="14" r="3.200" /><circle cx="5" cy="24.500" r="3.200" /></svg>
        </Overflow>
      </Toolbar>
      <BookmarksBar>
        {bookmarks.map(([label, Icon, w]) => (
          <Bookmark key={label} $w={w}><Icon />{label}</Bookmark>
        ))}
        <BookmarkMore>»</BookmarkMore>
      </BookmarksBar>
      <Page>
        <Navbar>
          <Brand>SimplyBlogging</Brand>
          <NavLink $w={215} $active>Home</NavLink>
          <NavLink $w={193}>Blog</NavLink>
          <NavLink $w={243}>Contact</NavLink>
          <NavLink $w={120}>About</NavLink>
        </Navbar>
        <Jumbotron>
          <Title>Welcome to SimplyBlogging!</Title>
          <Lead>{lead.map((l) => <Line key={l}>{l}</Line>)}</Lead>
          <Button $large $w={338}>Visit Our Blog »</Button>
        </Jumbotron>
        <Container>
          <Columns>
            {columns.map((c) => (
              <article key={c.title}>
                <Heading $ls={c.ls}>{c.title}</Heading>
                <Copy>{c.lines.map((l) => <Line key={l}>{l}</Line>)}</Copy>
                <Button $w={c.w}>{c.action}</Button>
              </article>
            ))}
          </Columns>
          <Rule />
        </Container>
      </Page>
    </BrowserWindow>
  );
}

export default function App() {
  return (
    <>
      <GlobalStyle />
      <Desktop>
        <SystemMenu />
        <FileWindow>
          <FileRow $h={38}>1</FileRow>
          <FileRow $alt $right={0}>509 by</FileRow>
          <FileRow>1</FileRow>
          <FileRow $alt />
          <FileRow />
          <FileRow $alt $h={25} />
          <ScrollTrack><ScrollThumb /></ScrollTrack>
          <PathBar>Blogging Write</PathBar>
        </FileWindow>
        <Browser />
        <Dock>
          {dockApps.map(([Icon, running], i) => (
            <DockItem key={i}><Icon />{running && <RunningDot />}</DockItem>
          ))}
          <DockSeparator />
          <DockItem><FolderIcon /></DockItem>
          <DockItem><TrashIcon /></DockItem>
        </Dock>
      </Desktop>
    </>
  );
}
